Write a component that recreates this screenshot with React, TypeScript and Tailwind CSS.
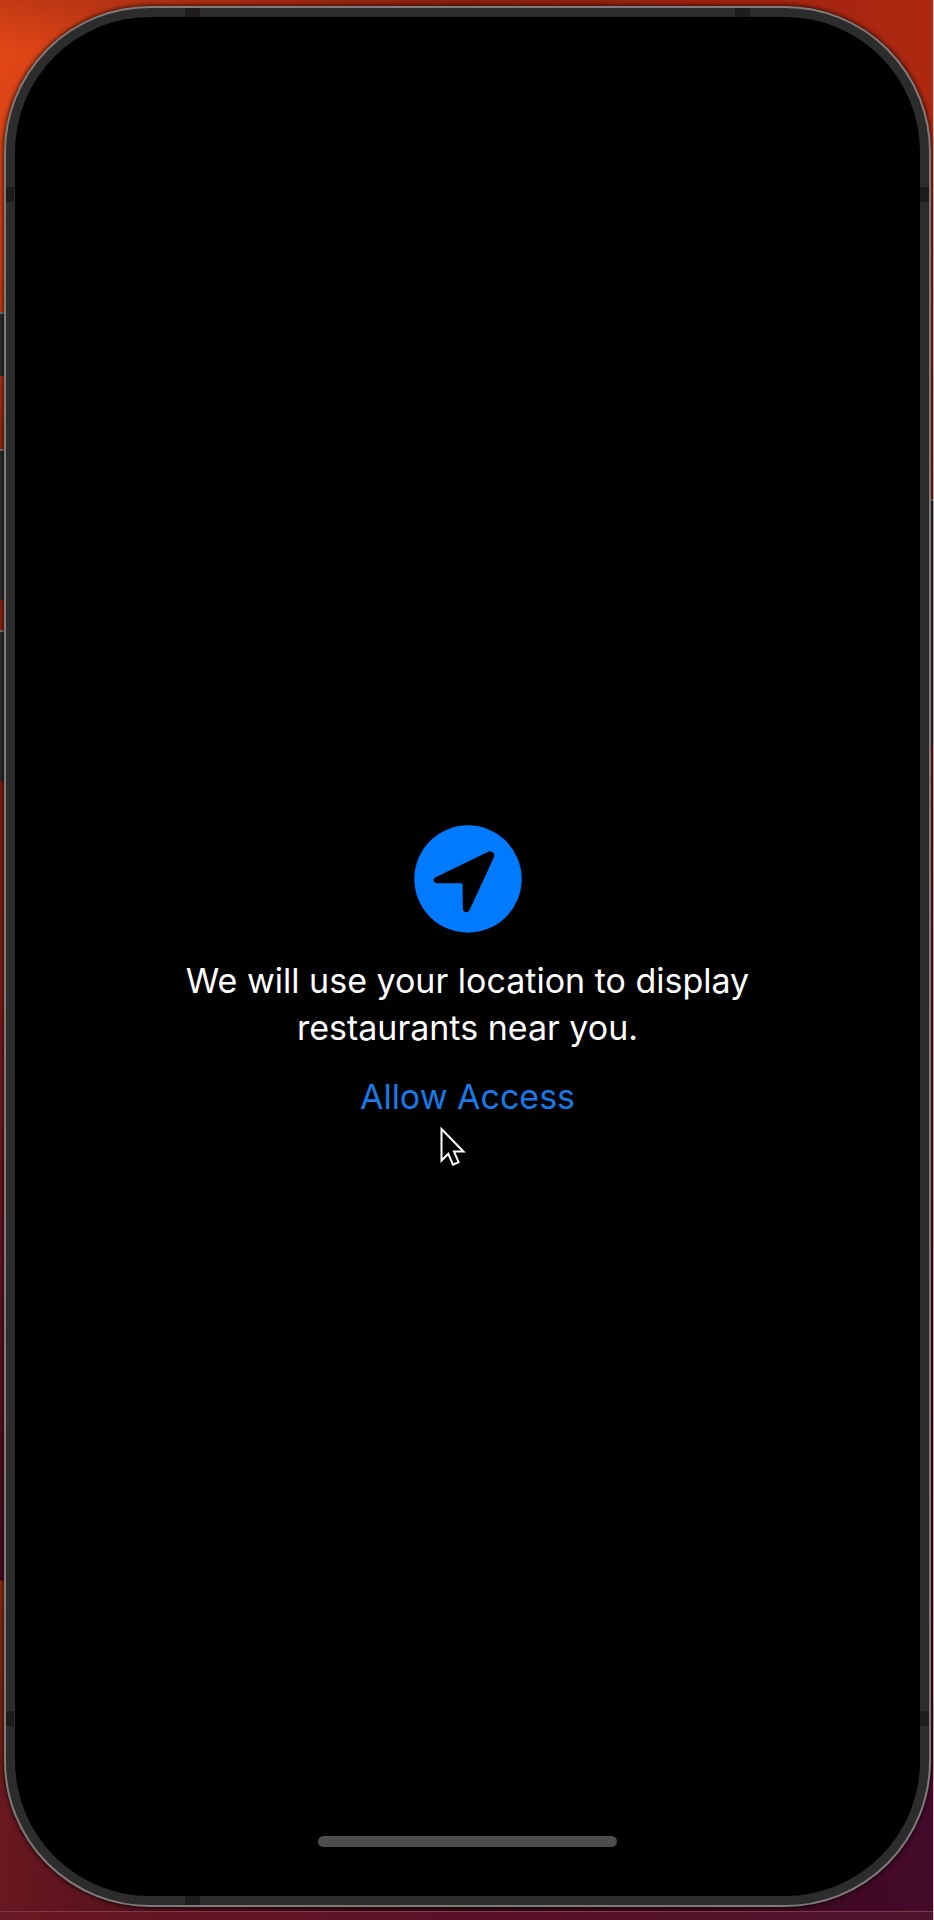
import React from "react";

function LocationIcon() {
  return (
    <svg viewBox="0 0 108 108" className="size-[108px]" aria-hidden="true">
      <circle cx="54" cy="54" r="53.7" fill="#007AFF" />
      <path
        d="M21.6 52.2 L74.4 26.8 C78.2 25.2 81.6 28.8 79.8 32.6 L55.8 84.6 C53.8 88.8 48.8 87.6 48.8 83.2 L48.6 59.4 C48.6 58.6 48.2 58.2 47.4 58.2 L23.6 58.2 C19 58.2 18.4 53.8 21.6 52.2 Z"
        fill="#000"
      />
    </svg>
  );
}

function Pointer() {
  return (
    <svg
      viewBox="0 0 26 40"
      className="pointer-events-none absolute top-full left-20 mt-[6px] h-10 w-[26px]"
      aria-hidden="true"
    >
      <path
        d="M1.5 3 L1.5 34.5 L8.3 27.8 L13 38.6 L18.6 36.2 L14 25.6 L23.4 25.6 Z"
        fill="#000"
        stroke="#fff"
        strokeWidth="2"
      />
    </svg>
  );
}

const leftKeys = ["top-[312px] h-16", "top-[449px] h-[151px]", "top-[630px] h-[151px]"];

const antennaBands = [
  "top-0 left-[179px] h-[9px] w-[15px]",
  "top-0 right-[179px] h-[9px] w-[15px]",
  "top-[179px] left-0 h-[15px] w-2",
  "top-[179px] right-0 h-[15px] w-[9px]",
  "bottom-[179px] left-0 h-[15px] w-2",
  "bottom-[179px] right-0 h-[15px] w-[9px]",
  "bottom-0 left-[179px] h-[9px] w-[15px]",
];

export default function App() {
  return (
    <div className="relative flex min-h-screen flex-col border-r border-[#e2c6c8] bg-[linear-gradient(180deg,#a8240f_0px,#8c1c12_400px,#4a0820_1300px,#420a2c_1920px)] font-['Inter','Liberation_Sans',sans-serif]">
      <div className="absolute inset-y-0 left-0 w-1/2 bg-[linear-gradient(180deg,#c23a14_0px,#e34717_50px,#c83c12_300px,#942810_440px,#801c10_800px,#7c2010_958px,#801c18_959px,#4a0820_1580px,#8a2c10_1581px,#7c2412_1715px,#681820_1800px)]" />
      <div className="absolute inset-x-0 top-0 h-[200px] bg-[linear-gradient(90deg,#e3471700,#8c1f10_50%,#ae2810)]" />
      <div className="absolute inset-x-0 bottom-0 h-[90px] bg-[linear-gradient(90deg,#681820,#4a0c18_25%,#30040f_50%,#440a2a)]" />
      {leftKeys.map((key) => (
        <span
          key={key}
          className={`absolute left-0 w-1 border-t-2 border-[#777] bg-[#2b2b2b] ${key}`}
        />
      ))}
      <span className="absolute top-[499px] right-0 h-[246px] w-[3px] border-t-2 border-[#777] bg-[#2b2b2b]" />

      <div className="relative mt-[6px] mr-[2px] ml-1 flex flex-1 flex-col rounded-[146px] border-2 border-[#807b7b] bg-[#2c2c2c] p-[9px] shadow-[0_0_4px_1px_#000000b0]">
        {antennaBands.map((band) => (
          <span key={band} className={`absolute bg-[#1d1b1b] ${band}`} />
        ))}
        <div className="relative flex flex-1 flex-col items-center rounded-[135px] bg-black">
          <main className="flex flex-1 flex-col items-center justify-center px-40 pt-[92px] text-center">
            <LocationIcon />
            <p className="mt-6 max-w-[600px] text-[34px] leading-[47px] text-white">
              We will use your location to display restaurants near you.
            </p>
            <div className="relative mt-[22px]">
              <button
                type="button"
                className="block cursor-pointer text-[34px] leading-[47px] text-[#177ae8]"
              >
                Allow Access
              </button>
              <Pointer />
            </div>
          </main>
          <div className="mb-[49px] h-[11px] w-[299px] rounded-full bg-[#4d4d4d]" />
        </div>
      </div>
      <div className="relative mt-1 h-[9px] border-t border-[#80384a] bg-[linear-gradient(90deg,#681820,#5a1028_50%,#4c142c)]" />
    </div>
  );
}
